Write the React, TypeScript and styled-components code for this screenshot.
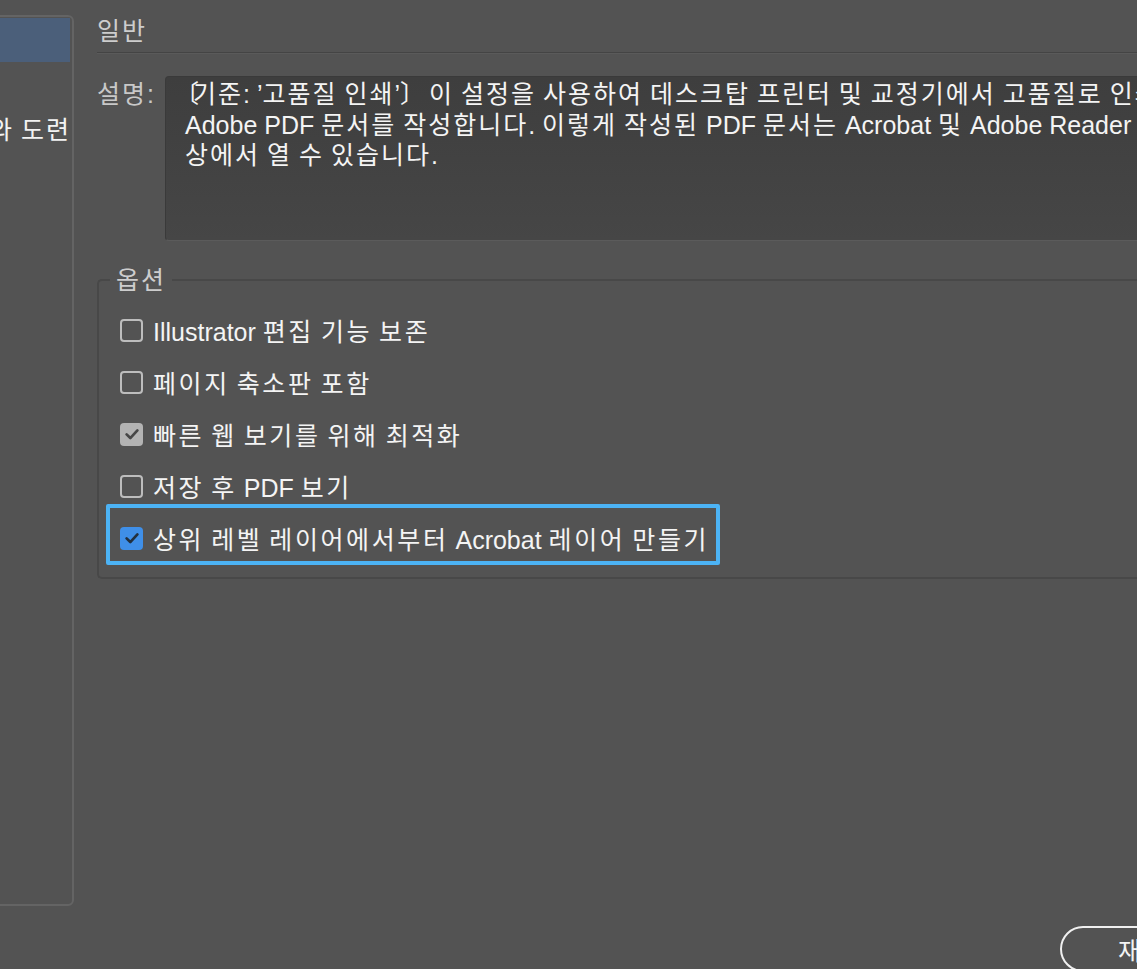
import React from "react";
import styled, { createGlobalStyle } from "styled-components";

type Option = {
  label: string;
  state: "off" | "on" | "focus";
};

const options: Option[] = [
  { label: "Illustrator 편집 기능 보존", state: "off" },
  { label: "페이지 축소판 포함", state: "off" },
  { label: "빠른 웹 보기를 위해 최적화", state: "on" },
  { label: "저장 후 PDF 보기", state: "off" },
  { label: "상위 레벨 레이어에서부터 Acrobat 레이어 만들기", state: "focus" },
];

const sections = ["일반", "압축", "표시와 도련", "출력", "고급", "보안", "요약"];

const description = [
  "〔기준: ’고품질 인쇄’〕 이 설정을 사용하여 데스크탑 프린터 및 교정기에서 고품질로 인쇄할 수 있는",
  "Adobe PDF 문서를 작성합니다. 이렇게 작성된 PDF 문서는 Acrobat 및 Adobe Reader 5.0 이",
  "상에서 열 수 있습니다.",
];

const FONT = `"Liberation Sans", "Noto Sans CJK KR", "Noto Sans", sans-serif`;

// hangul in the mac dialog font runs a little wider than noto's, so the
// hangul runs get some extra tracking; latin stays on liberation sans
const ko = (text: string) =>
  text.split(/([\uAC00-\uD7A3]+|〔|〕)/).map((part, i) => {
    if (part === "〔") return <OpenBracket key={i}>{part}</OpenBracket>;
    if (part === "〕") return <CloseBracket key={i}>{part}</CloseBracket>;
    if (/[\uAC00-\uD7A3]/.test(part)) return <Hangul key={i}>{part}</Hangul>;
    return part;
  });

const CheckMark: React.FC<{ color: string }> = ({ color }) => (
  <svg width="18" height="18" viewBox="0 0 16 16" fill="none">
    <path
      d="M3.2 8.3 L6.5 11.6 L12.8 4.8"
      stroke={color}
      strokeWidth="2.4"
      strokeLinecap="round"
      strokeLinejoin="round"
    />
  </svg>
);

const App: React.FC = () => {
  return (
    <>
      <GlobalStyle />
      <Window>
        <Sidebar>
          {sections.map((name, i) => (
            <SideItem key={name} selected={i === 0}>
              <span>{ko(name)}</span>
            </SideItem>
          ))}
        </Sidebar>

        <Main>
          <Heading>{ko("일반")}</Heading>

          <DescRow>
            <DescLabel>{ko("설명:")}</DescLabel>
            <DescBox>
              {description.map((line) => (
                <DescLine key={line}>{ko(line)}</DescLine>
              ))}
            </DescBox>
          </DescRow>

          <Options>
            <Legend>{ko("옵션")}</Legend>
            {options.map((opt) => (
              <Row key={opt.label} focused={opt.state === "focus"}>
                <Box state={opt.state}>
                  {opt.state === "on" && <CheckMark color="#474747" />}
                  {opt.state === "focus" && <CheckMark color="#22303f" />}
                </Box>
                <RowLabel>{ko(opt.label)}</RowLabel>
              </Row>
            ))}
          </Options>

          <Footer>
            <PillButton>{ko("재설정")}</PillButton>
          </Footer>
        </Main>
      </Window>
    </>
  );
};

const GlobalStyle = createGlobalStyle`
  html, body {
    margin: 0;
    padding: 0;
    background: #535353;
    overflow: hidden;
  }
`;

const Hangul = styled.span`
  letter-spacing: 2px;
`;

const OpenBracket = styled.span`
  margin-left: -11px;
  letter-spacing: -6px;
`;

const CloseBracket = styled.span`
  letter-spacing: -3px;
`;

const Window = styled.div`
  display: flex;
  align-items: flex-start;
  width: 1137px;
  height: 969px;
  overflow: hidden;
  background: #535353;
  font-family: ${FONT};
  color: #f0f0f0;
`;

const Sidebar = styled.div`
  flex: none;
  box-sizing: border-box;
  width: 165px;
  height: 891px;
  margin: 15px 0 0 -91px;
  padding-top: 1px;
  border: 2px solid #646464;
  border-radius: 6px;
  overflow: hidden;
`;

const SideItem = styled.div<{ selected: boolean }>`
  height: 44px;
  display: flex;
  align-items: center;
  padding-left: 28px;
  margin-right: 2px;
  font-size: 25px;
  white-space: nowrap;
  color: #f2f2f2;
  background: ${(p) => (p.selected ? "#4b5f7a" : "transparent")};
`;

const Main = styled.div`
  flex: none;
  width: 1200px;
  margin-left: 23px;
  display: flex;
  flex-direction: column;
`;

const Heading = styled.div`
  height: 38px;
  padding-top: 14px;
  line-height: 34px;
  font-size: 25px;
  color: #cdcdcd;
  border-bottom: 1px solid #444444;
  box-shadow: 0 1px 0 #5a5a5a;
`;

const DescRow = styled.div`
  display: flex;
  margin-top: 23px;
`;

const DescLabel = styled.div`
  flex: none;
  width: 68px;
  line-height: 36px;
  font-size: 25px;
  color: #c8c8c8;
`;

const DescBox = styled.div`
  box-sizing: border-box;
  flex: 1;
  height: 165px;
  padding: 2px 0 0 19px;
  background: linear-gradient(#3e3e3e, #464646);
  border: 1px solid #3a3a3a;
  border-bottom-color: #5b5b5b;
  border-radius: 4px 0 0 4px;
  overflow: hidden;
`;

const DescLine = styled.div`
  white-space: nowrap;
  font-size: 25px;
  line-height: 30.5px;
  color: #f4f4f4;
`;

const Options = styled.fieldset`
  margin: 26px 0 0;
  padding: 11px 0 13px 21px;
  border: 2px solid #484848;
  border-right: none;
  border-radius: 5px 0 0 5px;
  display: flex;
  flex-direction: column;
  align-items: flex-start;
  min-width: 0;
`;

const Legend = styled.legend`
  padding: 0 6px;
  margin-left: -10px;
  font-size: 25px;
  line-height: 26px;
  color: #cdcdcd;
`;

const Row = styled.div<{ focused: boolean }>`
  position: relative;
  display: flex;
  align-items: center;
  gap: 10px;
  height: 52px;
  margin-left: -10px;
  padding: 0 7px 0 10px;

  &::after {
    content: "";
    display: ${(p) => (p.focused ? "block" : "none")};
    position: absolute;
    top: -8px;
    bottom: -1px;
    left: -4px;
    right: -4px;
    border: 4px solid #4cb3f5;
    border-radius: 2px;
  }
`;

const Box = styled.div<{ state: Option["state"] }>`
  box-sizing: border-box;
  width: 23px;
  height: 23px;
  flex: none;
  display: flex;
  align-items: center;
  justify-content: center;
  border-radius: 4px;
  border: ${(p) => (p.state === "off" ? "2px solid #bdbdbd" : "none")};
  background: ${(p) =>
    p.state === "on" ? "#b3b3b3" : p.state === "focus" ? "#3f8fe8" : "transparent"};
`;

const RowLabel = styled.span`
  font-size: 25px;
  white-space: nowrap;
  color: #f4f4f4;

  ${Hangul} {
    letter-spacing: 2.6px;
  }
`;

const Footer = styled.div`
  display: flex;
  padding-left: 963px;
  margin-top: 347px;
`;

const PillButton = styled.button`
  flex: none;
  height: 46px;
  padding: 0 50px 0 56px;
  border: 2px solid #f0f0f0;
  border-radius: 23px;
  background: transparent;
  color: #f4f4f4;
  font-family: ${FONT};
  font-size: 25px;
  white-space: nowrap;
`;

export default App;
